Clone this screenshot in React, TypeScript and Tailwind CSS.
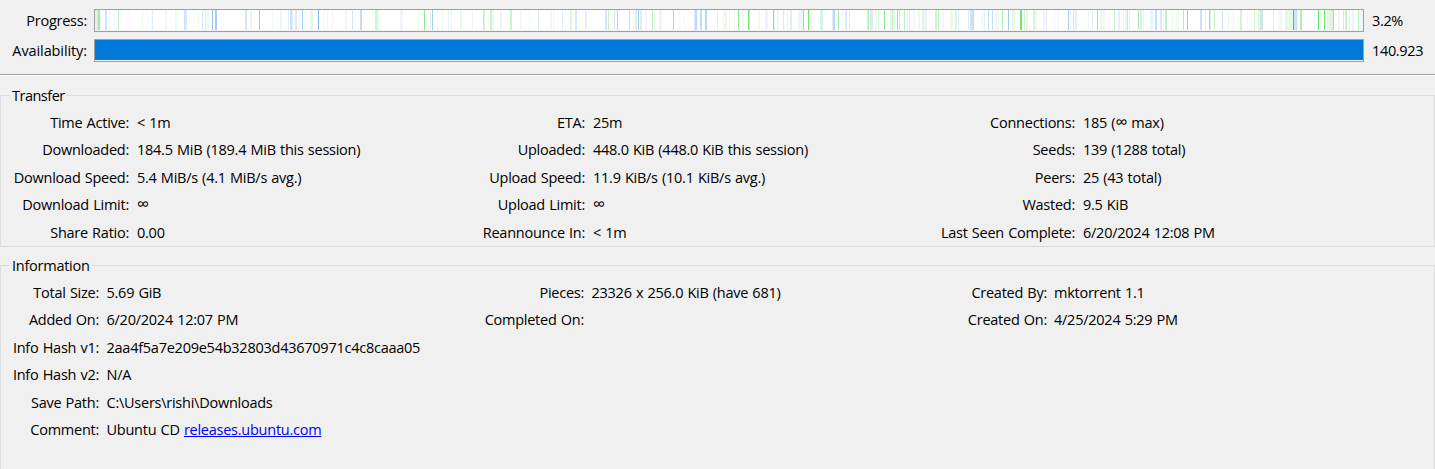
import React from "react";

type Stripe = [x: number, width: number, color: string];

// Downloaded (blue) and in-progress (green) piece runs, in bar pixels from the window edge
const stripes: Stripe[] = [
  [95, 2, "#e9efe9"], [97, 1, "#d5f3d5"], [98, 2, "#a1e8a3"], [105, 2, "#d2e5f8"], [109, 1, "#eef5fc"], [114, 1, "#f0f6fc"], [118, 1, "#bfefbf"],
  [129, 1, "#f4f6f8"], [142, 1, "#ebfaeb"], [147, 1, "#f2f8f2"], [152, 1, "#dbecfb"], [165, 2, "#f0f6fd"], [175, 2, "#eefaee"],
  [184, 1, "#c8dff5"], [185, 2, "#dceafa"], [198, 1, "#eef9ee"], [202, 1, "#d4e7f9"], [205, 1, "#dcedf8"], [207, 2, "#eef9ee"], [212, 1, "#92c3ee"],
  [215, 2, "#a8cfef"], [245, 2, "#d7e6f7"], [250, 2, "#e7f9e2"], [259, 1, "#a2cbed"], [272, 1, "#f2f7fc"], [280, 2, "#eff5fc"], [288, 1, "#e2eefa"],
  [290, 2, "#cfe2f6"], [292, 1, "#e1edf9"], [295, 2, "#dceaf9"], [299, 1, "#eff5fc"], [302, 1, "#afd1ef"], [310, 3, "#e9f7e9"], [318, 1, "#80b9ec"],
  [323, 1, "#f2f6fb"], [327, 1, "#f0f6fc"], [332, 1, "#ecf9ec"], [345, 2, "#f2f7fc"], [352, 1, "#d5e6f8"], [360, 2, "#c3dcf6"],
  [375, 2, "#d1f3d1"], [377, 2, "#e7f9e7"], [400, 3, "#f0f6fc"], [418, 1, "#eafbe9"], [424, 1, "#8be991"], [430, 1, "#e0f0f4"], [432, 1, "#a3cdef"],
  [437, 1, "#f2f6f3"], [442, 1, "#eff5fc"], [448, 1, "#ebf3fc"], [450, 2, "#effbef"], [460, 2, "#eaf8ea"], [472, 1, "#ecf4fc"],
  [483, 1, "#c7e4f1"], [484, 1, "#d9f7d9"], [490, 2, "#d0f4cf"], [492, 2, "#ebfbeb"], [500, 2, "#edf4fb"],
  [510, 2, "#cbf4cb"], [520, 2, "#effbed"], [529, 1, "#f3f7fb"], [538, 1, "#dceafa"], [550, 2, "#eff9ed"], [553, 1, "#f3f7f1"], [562, 1, "#e1edfa"],
  [570, 2, "#dbf7dc"], [575, 2, "#d9e9fa"], [585, 2, "#e8f1fb"], [605, 2, "#d6e6f9"], [608, 1, "#caf2c6"], [614, 1, "#d6e7f9"], [617, 1, "#b2d4f5"],
  [629, 1, "#c5def7"], [633, 1, "#eff6fb"], [635, 2, "#d8f6dc"], [638, 1, "#a4ccef"], [640, 2, "#deecf9"], [645, 2, "#f0f6fc"],
  [652, 1, "#bdf0bd"], [654, 1, "#dff8df"], [659, 3, "#eef4fc"], [673, 1, "#9fe9a0"], [679, 1, "#f6f7f9"], [684, 1, "#f3f7fb"], [694, 1, "#dfebfa"],
  [695, 2, "#bcd9f7"], [700, 2, "#c3dcf8"], [705, 2, "#b8d7f5"], [717, 1, "#e3effc"],
  [723, 2, "#f3f9f3"], [725, 2, "#eaf9ea"], [729, 1, "#eef4fc"], [734, 1, "#ecf9ec"], [738, 1, "#92e895"], [742, 2, "#eff5f9"], [748, 1, "#77e77a"], [749, 1, "#c4eac6"],
  [758, 2, "#f2faf0"], [765, 3, "#eef4fb"], [773, 1, "#85e98a"], [774, 1, "#e4f8e4"], [777, 2, "#f0f6fc"], [783, 1, "#dbe9f9"], [787, 1, "#f0f6fc"], [790, 2, "#dfecf9"],
  [798, 5, "#eff5fc"], [803, 1, "#9dcdf3"], [808, 1, "#75e777"], [809, 1, "#d1eee8"], [811, 1, "#e7f1fc"], [820, 2, "#deecf7"], [822, 1, "#d2f4d2"],
  [832, 1, "#dfedf9"], [833, 1, "#c7dff6"], [834, 1, "#b6d6f5"], [838, 1, "#a8ecaa"], [842, 1, "#eef7fc"], [845, 2, "#dceaf9"], [849, 1, "#d8f4dc"], [854, 1, "#f1f7fd"],
  [867, 1, "#daf5da"], [868, 1, "#afeeb1"], [870, 3, "#dcebf1"], [875, 2, "#ecf9ec"], [878, 1, "#d5f5d5"], [884, 1, "#92e896"], [890, 2, "#e2f8e2"],
  [892, 1, "#c7f2c7"], [893, 2, "#e1f8e1"], [897, 1, "#a5cfed"], [899, 1, "#c3f0c3"], [904, 1, "#baf0bb"], [907, 1, "#dff7df"], [909, 1, "#d5f5d6"], [914, 1, "#edf4fb"],
  [918, 2, "#eefbea"], [922, 2, "#e3f6e5"], [924, 3, "#ebf4fa"], [935, 2, "#cef4ce"], [938, 1, "#bdf2bf"], [943, 1, "#f1f5f7"],
  [950, 3, "#edf9ea"], [955, 2, "#dcf5dd"], [958, 1, "#dcecfa"], [968, 1, "#deebf8"], [970, 3, "#cfe2f4"], [973, 1, "#b6ecbb"], [982, 1, "#ecf4fc"], [984, 1, "#eaf3fb"],
  [988, 1, "#c4dcf7"], [992, 1, "#c5def7"], [995, 2, "#edf4fc"], [998, 1, "#e3f9e0"], [1002, 1, "#acedaf"], [1008, 1, "#9fceed"], [1012, 3, "#e7f8e6"],
  [1020, 2, "#6ce970"], [1024, 1, "#cef1cf"], [1026, 2, "#e8f8e5"], [1033, 2, "#daf4da"], [1035, 2, "#effaef"], [1043, 2, "#edf4fc"], [1046, 1, "#dfebf7"], [1054, 1, "#f2f8fd"], [1058, 1, "#eef5f7"],
  [1068, 1, "#a5ceec"], [1070, 1, "#ecf3fc"], [1073, 1, "#c9f0ce"], [1075, 2, "#e1eefb"], [1088, 1, "#f0f6fc"], [1092, 1, "#e1f1f8"], [1097, 1, "#abcff5"],
  [1100, 2, "#eff7f5"], [1103, 2, "#f2f6fb"], [1109, 1, "#f1f7fa"], [1114, 1, "#c7f4c5"], [1118, 2, "#e4eefa"], [1123, 1, "#eef4fa"], [1125, 2, "#e7f9e7"], [1127, 1, "#cbe1f6"], [1129, 1, "#e5f6e9"], [1138, 1, "#a6edaa"],
  [1140, 2, "#dcebf7"], [1143, 1, "#e9f9e9"], [1150, 3, "#e9f3fc"], [1155, 2, "#c4dff7"], [1160, 2, "#dae9f9"], [1163, 1, "#eef7f9"], [1165, 2, "#bff1c3"],
  [1172, 1, "#e7f9e7"], [1176, 1, "#effaee"], [1178, 1, "#ebf9e9"], [1183, 1, "#c3dcf7"], [1187, 1, "#a3cbed"], [1200, 2, "#cfe2f5"], [1205, 1, "#eaf3fc"],
  [1209, 1, "#a4ceed"], [1210, 1, "#e2f2e8"], [1214, 1, "#c8f2c8"], [1222, 1, "#d1e5f9"], [1228, 1, "#edf5fc"], [1233, 1, "#edf5fc"], [1240, 2, "#d2f4d2"],
  [1247, 1, "#effaf1"], [1254, 1, "#d8f6d7"], [1258, 2, "#e2f7e2"], [1260, 2, "#c9f2c8"], [1262, 1, "#c8dff6"], [1273, 1, "#daf6d9"], [1279, 3, "#f1f6fc"],
  [1285, 8, "#e6f8e6"], [1293, 1, "#5aa6dc"], [1294, 3, "#cfe3f5"], [1297, 1, "#e0f0f7"], [1300, 2, "#b3efb5"], [1314, 1, "#edf4fb"], [1318, 1, "#63e469"],
  [1320, 2, "#eaf9ea"], [1324, 1, "#67e86b"], [1327, 3, "#e8f5ea"], [1330, 3, "#dcf6dc"], [1333, 1, "#9fe9a2"], [1338, 2, "#f0f6fc"], [1343, 1, "#d1e6f6"], [1345, 2, "#c8f2ca"],
  [1349, 1, "#e0f3f0"], [1352, 2, "#edf4fc"], [1358, 1, "#bef1c0"], [1359, 4, "#f0f7fc"],
];

function PieceMap() {
  return (
    <svg width="1268" height="20" viewBox="95 0 1268 20" shapeRendering="crispEdges" className="block bg-white">
      {stripes.map(([x, width, color]) => (
        <rect key={x} x={x} y="0" width={width} height="20" fill={color} />
      ))}
    </svg>
  );
}

type BarProps = { label: string; value: string; children: React.ReactNode; labelTracking?: string };

function BarRow({ label, value, children, labelTracking = "" }: BarProps) {
  return (
    <div className="flex h-[23px] items-center">
      <div className={`w-[87px] text-right ${labelTracking}`}>{label}</div>
      <div className="ml-[7px] h-[23px] w-[1270px] border border-[#a0a0a0] bg-[#f0f0f0]">{children}</div>
      <div className="ml-[8px] tracking-[-0.35px]">{value}</div>
    </div>
  );
}

const infinity = <span className="text-[17px] leading-[16px]">∞</span>;

type Item = [label: string, value: React.ReactNode];
type ColumnProps = { items: Item[]; className?: string; labels: string; gap?: string };

function Column({ items, className = "", labels, gap = "ml-[8px]" }: ColumnProps) {
  return (
    <div className={className}>
      {items.map(([label, value]) => (
        <div key={label} className="flex h-[27.5px] items-center">
          <div className={`${labels} text-right`}>{label}</div>
          <div className={gap}>{value}</div>
        </div>
      ))}
    </div>
  );
}

export default function App() {
  return (
    <div className="h-[469px] w-[1435px] overflow-hidden whitespace-nowrap bg-[#f0f0f0] pt-[9px] font-['Open_Sans','Noto_Sans',sans-serif] text-[14.5px] leading-[20px] tracking-[-0.25px] text-black [word-spacing:0.7px]">
      <div className="flex h-[65px] flex-col gap-[7px]">
        <BarRow label="Progress:" value="3.2%">
          <PieceMap />
        </BarRow>
        <BarRow label="Availability:" value="140.923" labelTracking="tracking-[-0.1px]">
          <div className="h-[20px] bg-[#0078d7]" />
        </BarRow>
      </div>
      <div className="h-[2px] border-t border-[#a0a0a0] bg-white" />

      <fieldset className="mt-[9px] h-[162px] border border-[#dcdcdc]">
        <legend className="ml-[9px] h-[20px] px-[2px] leading-[22px] tracking-[-0.5px]">Transfer</legend>
        <div className="-ml-px flex pt-[4px]">
          <Column className="w-[460px]" labels="w-[129px]" items={[
            ["Time Active:", "< 1m"],
            ["Downloaded:", "184.5 MiB (189.4 MiB this session)"],
            ["Download Speed:", "5.4 MiB/s (4.1 MiB/s avg.)"],
            ["Download Limit:", infinity],
            ["Share Ratio:", "0.00"],
          ]} />
          <Column className="w-[460px]" labels="w-[125px]" items={[
            ["ETA:", "25m"],
            ["Uploaded:", "448.0 KiB (448.0 KiB this session)"],
            ["Upload Speed:", "11.9 KiB/s (10.1 KiB/s avg.)"],
            ["Upload Limit:", infinity],
            ["Reannounce In:", "< 1m"],
          ]} />
          <Column labels="w-[155px]" items={[
            ["Connections:", <>185 ({infinity} max)</>],
            ["Seeds:", "139 (1288 total)"],
            ["Peers:", "25 (43 total)"],
            ["Wasted:", "9.5 KiB"],
            ["Last Seen Complete:", "6/20/2024 12:08 PM"],
          ]} />
        </div>
      </fieldset>

      <fieldset className="mt-[8px] h-[231px] border border-[#dcdcdc]">
        <legend className="ml-[9px] h-[20px] px-[2px] leading-[22px]">Information</legend>
        <div className="-ml-px flex pt-[4px]">
          <Column className="w-[460px]" labels="w-[99px]" gap="ml-[7.5px]" items={[
            ["Total Size:", "5.69 GiB"],
            ["Added On:", "6/20/2024 12:07 PM"],
            ["Info Hash v1:", "2aa4f5a7e209e54b32803d43670971c4c8caaa05"],
            ["Info Hash v2:", "N/A"],
            ["Save Path:", "C:\\Users\\rishi\\Downloads"],
            ["Comment:", <>Ubuntu CD <a className="text-[#0000ff] underline">releases.ubuntu.com</a></>],
          ]} />
          <Column className="w-[460px]" labels="w-[124px]" gap="ml-[7.5px]" items={[
            ["Pieces:", "23326 x 256.0 KiB (have 681)"],
            ["Completed On:", ""],
          ]} />
          <Column labels="w-[127px]" gap="ml-[7px]" items={[
            ["Created By:", "mktorrent 1.1"],
            ["Created On:", "4/25/2024 5:29 PM"],
          ]} />
        </div>
      </fieldset>
    </div>
  );
}
